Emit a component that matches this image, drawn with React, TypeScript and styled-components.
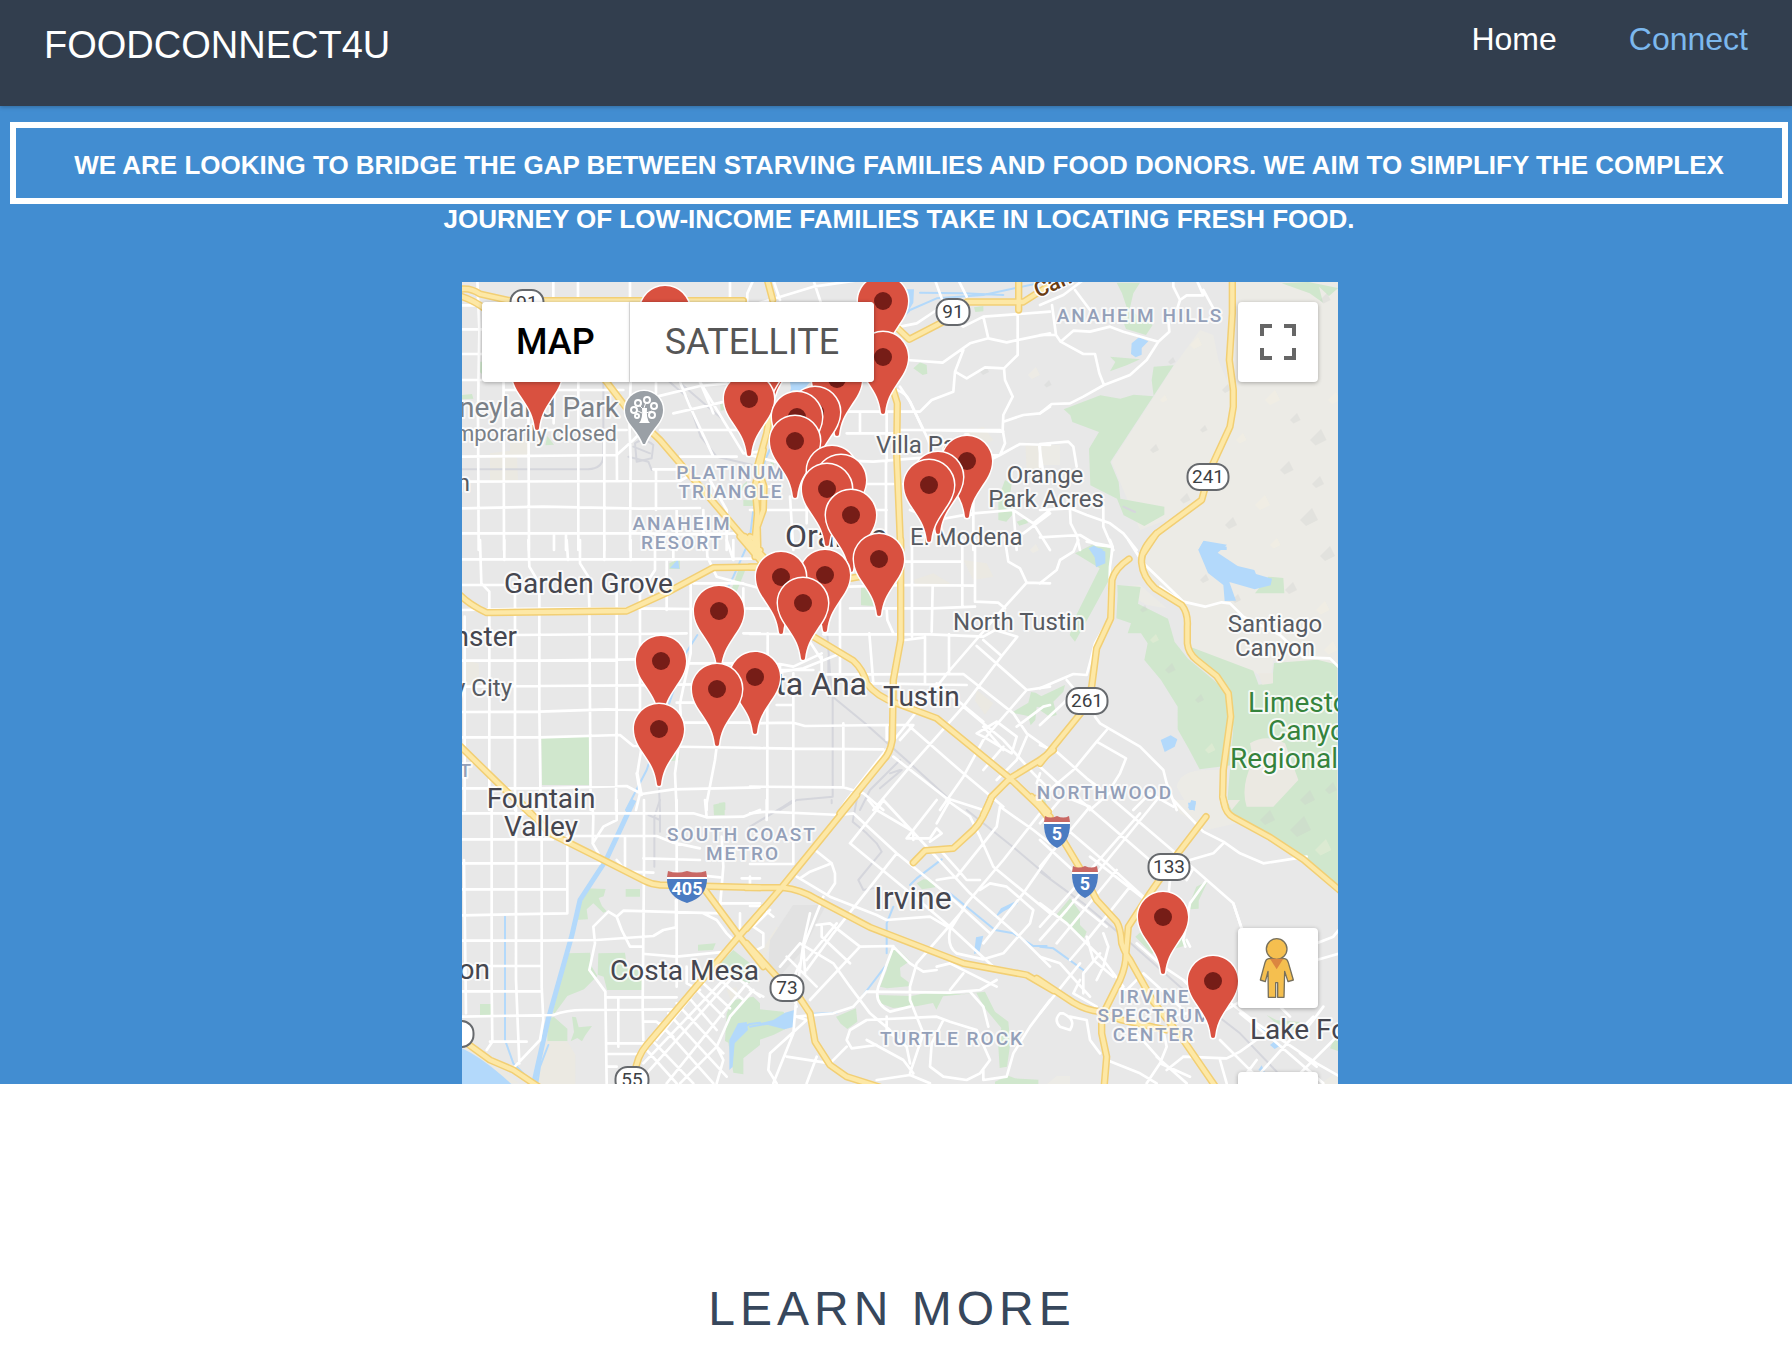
import React from "react";
import styled, { createGlobalStyle } from "styled-components";

const GlobalStyle = createGlobalStyle`
  *, *::before, *::after { box-sizing: border-box; }
  body {
    margin: 0;
    background: #fff;
    font-family: "Liberation Sans", Arial, Helvetica, sans-serif;
  }
`;

const Header = styled.header`
  position: relative;
  z-index: 1;
  display: flex;
  justify-content: space-between;
  align-items: flex-start;
  min-height: 106px;
  padding: 20px 44px 0;
  background: #323e4e;
  box-shadow: 0 1px 4px rgba(0, 0, 0, 0.25);
`;

const Brand = styled.a`
  color: #fff;
  font-size: 38px;
  line-height: 50px;
  text-decoration: none;
`;

const Nav = styled.nav`
  display: flex;
  gap: 72px;
`;

const NavLink = styled.a<{ $active?: boolean }>`
  color: ${(p) => (p.$active ? "#7cb8ee" : "#fff")};
  font-size: 32px;
  line-height: 38px;
  text-decoration: none;
`;

const Hero = styled.main`
  display: flex;
  flex-direction: column;
  padding: 16px 0 0 8px;
  background: #428dd1;
`;

const Mission = styled.p`
  height: 82px;
  margin: 0 4px 0 2px;
  padding: 10px 24px;
  border: 6px solid #fff;
  color: #fff;
  font-size: 26px;
  font-weight: 700;
  line-height: 54px;
  text-align: center;
  text-transform: uppercase;
`;

const MapFrame = styled.section`
  position: relative;
  width: 100%;
  max-width: 876px;
  height: 802px;
  margin: 78px auto 0;
  overflow: hidden;
  background: #e8e8e8;
  font-family: Roboto, Arial, sans-serif;
`;

const MapDrawing = styled.svg`
  display: block;
  width: 100%;
  height: 100%;
`;

const MapTypes = styled.div`
  position: absolute;
  top: 20px;
  left: 20px;
  display: flex;
  gap: 1px;
  border-radius: 4px;
  background: #e4e4e4;
  box-shadow: 0 1px 4px rgba(0, 0, 0, 0.3);
`;

const MapTypeButton = styled.button<{ $selected?: boolean }>`
  height: 80px;
  padding: 0 ${(p) => (p.$selected ? 34 : 35)}px;
  border: 0;
  border-radius: ${(p) => (p.$selected ? "4px 0 0 4px" : "0 4px 4px 0")};
  background: #fff;
  color: ${(p) => (p.$selected ? "#000" : "#565656")};
  box-shadow: ${(p) => (p.$selected ? "none" : "-1px 0 3px rgba(0, 0, 0, 0.12)")};
  font-family: inherit;
  font-size: 36px;
  font-weight: ${(p) => (p.$selected ? 500 : 400)};
  text-transform: uppercase;
`;

const SideControls = styled.div<{ $top: number }>`
  position: absolute;
  top: ${(p) => p.$top}px;
  right: 20px;
  display: flex;
  flex-direction: column;
  gap: 64px;
`;

const SquareButton = styled.button`
  display: grid;
  place-items: center;
  width: 80px;
  height: 80px;
  padding: 0;
  border: 0;
  border-radius: 4px;
  background: #fff;
  box-shadow: 0 1px 4px rgba(0, 0, 0, 0.3);
`;

const LearnMore = styled.section`
  padding: 197px 8px 20px 0;
  text-align: center;
`;

const LearnTitle = styled.h2`
  margin: 0;
  color: #37475c;
  font-size: 48px;
  font-weight: 400;
  letter-spacing: 5px;
  line-height: 56px;
  text-transform: uppercase;
`;

/* Each tile holds its shapes in thirds of a map unit, from its own corner. */
type Tile = {
  x: number;
  y: number;
  hill?: string;
  park?: string;
  water?: string;
  sand?: string;
  stream?: string;
  rail?: string;
  minor?: string;
  major?: string;
  highway?: string;
};

const tiles: Tile[] = [
  {
    x: 460,
    y: 280,
    park:
      "M60 245h10v40l-10-8zM6 345l30-3 4 14-34 2zM262 468l20 26-26 2zM780 370l14-14v34l-12 2zM836 628l24-24 6 34zM850 660l45 2v16h-45z",
    sand: "M90 520l80-10 4 90-84 6zM150 470h60v60h-60z",
    stream: "M900 690 L880 770 L872 810",
    rail:
      "M0 568H385Q428 565 430 530V310 M622 300 L680 350 L722 470 L770 530 L900 560 M650 300 L790 420 M525 490 Q550 470 580 495 L575 535 L530 545Z M505 530 L565 545 L575 570 M520 500 L570 520",
    minor:
      "M52 0 L58 150 L54 400 L56 810 M130 76 L132 810 M205 300 L207 810 M280 6V66 M281 300 V430 M282 760 V810 M318 760V810 M354 0V66 M355 306 V810 M433 450 V810 M470 480 L471 600 M510 0V66 M512 306 L508 420 L512 540 L510 810 M588 570 V690 M588 306V340 M660 306 L690 380 L760 530 M810 0V66 M880 0 L862 40V66 M720 306 L760 400 M0 76H66 M0 148H70 M0 222H66 M0 300H66 M130 330 H490 M0 450 H500 M600 450H900 M0 530 L470 525 L520 480 L560 440 M0 605 L660 603 L700 580 M0 685 L250 680 L540 686 L720 684 M0 760 H560 L650 763 L840 760 M580 568H650 M640 400 L860 350 M590 350 L720 318 L800 310 M720 306 L850 520 L900 515 M660 530H830 M750 600 L800 690V810 M650 690V810 M730 690 V810",
    highway:
      "M0 28 Q30 22 60 42 L150 62H850 M0 48 Q40 60 80 90 M420 280 L500 385 L600 480 L720 620 L840 760 L910 830 M910 510 L885 620 L892 700 L882 810",
  },
  {
    x: 750,
    y: 280,
    park:
      "M490 265l20-18 20 8 2 26-14 4zM672 82l28-4v16l-24 2zM745 655l20-55 20 12-6 40 12 48-22 25-24-5zM800 725l28-10 6 14-26 8zM60 545l15-8-5 24z",
    sand: "M826 490l40 5 8 70-44 4zM640 460l60-20 30 40-40 20z",
    water:
      "M470 28h22l-2 40-30 50zM120 306h60l-20 24h-36zM186 306h36l4 16-30 6z",
    stream:
      "M455 115 L480 90 L560 55 L700 45 L900 2 M510 38 L640 40 L760 45 M150 330L140 350 M45 540 L30 610 L10 690 L0 770 M130 310 L100 420 L45 540",
    minor:
      "M70 0 L90 60 M0 78 L190 20 L330 0 M190 0 L212 66 M555 0 L575 55 M625 0 L650 50 M450 140 L500 130 L560 90 L640 140 L700 110 L900 95 M700 110 L715 175 L660 190 L578 248 L470 240 M715 175 L770 187 L900 160 M640 210 L615 275 L650 295 L705 262 L762 265 M803 100 V225 L762 265 L765 300 L788 350 L760 405 L758 450 L765 490 L750 525 L680 560 M615 275 L610 335 L545 360 L510 395 H330 M450 320 L480 365 L520 450 M330 395 V460 M260 395 H330 M0 525 L130 560 L290 542 L370 545 L560 530 L750 525 L810 492 L900 495 M450 450 L750 450 M520 450 L760 455 M290 460 H430 L450 450 M760 425 L820 405 L870 400 L900 380 M868 500 L880 580 M0 620H60 M340 612H430 M360 690H410 M120 650 L130 810 M170 680 V730 M410 395 V545 M408 545V810 M480 690 L560 720 L670 700 L790 690 L850 730 L900 690 M670 540 V810 M560 620 V690 M460 612 H560 M0 690H220 M790 690 L800 810 M850 730 L900 810 M820 760 L900 700",
    major: "M440 330 Q470 340 480 365 L530 470 L560 540",
    highway:
      "M52 0 L68 60 M806 0V90 M440 142 L478 178 L580 125 L650 66H820 L900 15 M428 325 L442 370 L440 520 L452 810 M60 400 L50 460 L22 560 L42 620 L40 690 L22 740 L24 810 M-15 770 L30 810",
  },
  {
    x: 1040,
    y: 280,
    hill:
      "M480 150 L520 165 L535 240 L560 300 L575 0 H900 V810 H320 L380 720 L300 750 L215 545 L400 260Z M0 495h60v60H0z",
    park:
      "M230 8h70l-20 32-14 60-20-60zM240 100l28-10 70 45-20 30-60-18zM210 230l90 8-40 18-50 18 16-28zM335 300l6-40 60-4-190 290 25 60 5 50 132 24v24l-60 34-62-32-20-50-80-40-4-110 30-50-80-30-6-20-20-18 110-42 60 10 40-12 60 5zM725 10l80-4 90 18-28 24-30-28 12 48-40-28z M150 800l40-8 20 18z",
    water: "M275 190l22-18 28 12-20 20v20l-18 8-14-10zM490 784l70 16v10h-85zM160 810l20-6 12 6z",
    rail: "M250 680 L285 696",
    minor:
      "M0 75 L70 45 L130 0 M105 30 L150 90 M36 75 L48 165 H0 M48 165 L62 185 L130 222 H165 L178 280 L192 315 L130 350 L90 370 L35 372 L0 400 M192 315 L270 285 L320 240 L355 185 L250 155 L210 140 L150 155 L100 152 L62 185 M355 185 L388 155 L385 120 M400 0 V20 L420 60 L412 85 M420 60 L440 46 H490 L470 0 M490 30 L520 85 M0 492 L85 485 L100 500 L110 560 M0 500V560 M0 690 L90 685 L140 705 L210 730 L250 760 L290 810 M90 690 L92 730 L110 765 L120 810 M0 772 L120 765 L170 795 L215 800 M190 680V740 L220 810",
    highway:
      "M577 -10 V100 L568 240 L580 330V380 L570 440 L510 570 L485 660 L350 760 L310 820",
  },
  {
    x: 460,
    y: 540,
    park:
      "M244 595l144-6v146H246zM628 70l32-15v32h-32zM842 70l14 20-28 70-16-4zM630 664l28-46v42zM778 788h18v22h-18z",
    sand: "M10 360l46 10 2 60-48 16z",
    water: "M630 84l24-26 4 28z",
    stream: "M860 20 L820 110 L790 170 M712 285 L680 335 L560 690 L498 810",
    rail: "M597 740 L600 810",
    minor:
      "M60 0 L64 130 L88 155 V810 M0 135H130 M133 0 V60 M205 0 L208 80 L238 130 V500 L242 810 M320 0 L324 60 M360 0 V70 L385 110 L388 200 L392 810 M433 0V60 M470 160 V520 L468 810 M512 0 V60 M585 0V90 L540 160V520 L545 620 L532 700 L545 765 M165 150 V810 M14 230V810 M0 58 H640 L900 56 M0 210 L240 206 L540 205 L700 207 L900 205 M0 285H165 L540 282 L680 280 M850 280H900 M0 362H240 L530 358 M0 440 L240 438 L530 436 L700 433 M0 516 L240 515 L440 508 L540 510 M0 592H240 L480 585 L520 618 L900 624 M0 745H240 L500 738 L545 762 L640 748 L900 742 M640 60 V10 M740 0 L742 50 L770 110 L900 145 M820 0V60 M800 0 L820 60 M850 145 V210 M692 130 V340 L660 490 L664 560 L645 700 L650 810 M770 620 L765 660 L740 790V810 M650 488 H700 M645 548 H900 M690 370 H830 M700 130 H850 M530 700 L540 760 L528 810 M620 60V210",
    highway: "M0 165 Q30 195 80 218 L500 213 L620 158 L760 83 L900 81 M840 -10 L900 60 M0 618 L120 735 L210 820 M885 0V50",
  },
  {
    x: 750,
    y: 540,
    park:
      "M333 140h37v58l-37-2zM785 518l50-30 8-32 14 2 20 12 23-10v48l-40-8-4 40-14 16-8-28z",
    sand: "M490 120l60-20 50 30-10 10h-90zM680 450l50 40-25 34-30-42zM640 60l70 10 20 40-60 10z",
    rail:
      "M232 280 L240 400 L248 470 L345 550 L480 670 L590 770 M248 470 V770 L140 780 L90 810 M450 660 L360 750 L330 810 M455 690 L390 745 M420 700 L450 690 M235 350V470",
    minor:
      "M0 206H90 M270 140 V400 M0 282 H160 M220 283 L540 283 L700 290 M300 205 H550 L675 200 M300 140 L480 135 L675 137 M486 0 V290 M460 65 H635 M637 0 V200 M675 0 V185 L745 188 L765 205 M548 140 L545 275 M410 205 L412 240 L430 280 M525 290 V430 M597 283 V400 M465 300 L525 292 M358 280 L370 430 M0 372H90 L130 380 L215 340 M90 372 V410 M60 400 L160 385 L260 345 M170 290 L215 360 M80 390 H190 M230 403 H360 L640 402 L790 520 L830 580 L900 630 M360 430 L650 435 M765 0 L775 65 L810 85 L830 128 L900 130 M830 128 L760 205 L600 390 L440 590 L290 780 L270 810 M700 290 L735 270 L802 290 L755 348 L700 300 M755 348 L640 500 L480 680 L370 810 M680 318 L830 450 L900 440 M830 450 L700 600 L640 710 L570 810 M640 500 L760 600 L850 700 M560 430 L700 545 M480 560 L640 700 L760 800 M430 650 L590 775 L700 810 M0 550 L130 548 L165 558 L410 555 H490 L450 600 M0 624 L130 626 L400 628 M0 740 L280 742 L340 760 L400 810 M53 280V400 M130 400 V810 M52 495 V810 M80 495H130 M280 550 V740 M410 560 V600 M680 580 L740 545 L800 590 L785 640 L700 590Z M700 560 L760 630 M830 590 L800 660 L740 720 M800 560 L880 500 L900 495 M760 620 L700 690 M850 700 L900 750 M870 700 L860 730 M215 350 V400",
    highway:
      "M0 15 L35 50 M0 81H30 M300 115 L330 110 M190 290 L310 362 Q340 390 350 430 Q380 470 440 490 L560 535 L780 715 L900 830 M452 0 V300 L430 420 L427 600 Q420 640 400 660 L270 820 M780 715 L870 660 L910 630 M780 715 L725 770 L700 825 M0 -10 L20 0V15",
  },
  {
    x: 1040,
    y: 540,
    hill:
      "M335 0 L300 60 L310 100 L440 210 L455 330 L500 350 L650 400 L690 430 L700 360 L900 385 V0Z M410 740 Q420 690 500 690 L545 690 L570 810 H900 V700 L860 720 L830 770 L780 810 L450 810Z M230 140l70-5 80 70-60-10z",
    park:
      "M105 40l50-25 55 10 5 80-60 110-50 90-16-20 20-60 40-80 30-60zM232 135l70 6-8 50 90 45 20 70 40 50 60 50 70 60 0 210-95 12-32-60-34-60V500l-50-80-50-60 10-50-20-30h-40l10-30-44-15 4-70zM450 320l190 72 16 42 40-5 6-60 130-10 60 15V810H560l20-250-14-100-60-60zM645 160l40-50 45 4 3 46zM0 470l75-35-5 20-30 30 10 40-20 6-30-20z",
    sand: "M630 610 Q680 580 735 610 L775 720 L700 800 H620 Q600 740 640 660Z M655 400h44v30l-32 4z",
    water:
      "M475 30l16-28 70 12-28 24 60 40 50 12 5 12 48 14-4 20-48 12-76-22 20 56-34 1-4-48-46-36zM146 25l16-8 34 18v35l-28 12-4-30zM362 600l30-14 20 12-8 22-30 16zM444 788h24l-8 22h-12z",
    minor:
      "M265 0 L300 55 M300 60 L430 185 L495 200 L545 187 L570 190 L610 230 L720 285 L790 352 L870 355 L900 385 M430 190 L360 140 M210 0 L218 20 L210 80 L205 240 L165 310 L155 350 L140 405 L100 402 L0 445 M115 0 L100 35 L60 60 L50 90 L0 130 M80 420 L105 450 L70 490 L0 555 M165 530 L180 550 L300 620 L370 690 L380 730 L410 810 M200 570 L170 605 L100 690 L40 740 L0 780 M0 615 L50 635 L140 715 L180 745 M170 605 L258 655 L240 700 L215 740 M0 680 L60 735 M280 810 L330 760 L400 800 M140 5 L210 18 M150 810 L230 740",
    highway:
      "M350 -20 Q300 30 305 70 Q308 110 345 145 L425 195 Q445 220 442 260 V310 Q445 340 470 360 L530 408 L565 460 L572 530 L550 690 L548 770 L556 800 M267 57 Q225 85 216 120 L212 235 L170 325 L155 440 L130 510 L0 670 M-12 775 L25 815",
  },
  {
    x: 460,
    y: 800,
    park:
      "M345 360l30-95 62 2-6 22-15 5 10 24 14 16-10 4-30-28-20 18 4 30zM497 267h43v23h-43zM320 460l70-2 4 40 18 30-40 40-50 20-40 55-3-10zM415 460l80-2 6 46 48 10v56h-108l-10-40-18-6zM60 612h35v33H60zM262 655l20-4 40 35v38h-60zM336 650l12 2 8 30 40-4-20 28-10 18-14-10-20 10 10-28zM714 434l53-4-8 20-45 2zM760 14l34-8v40h-32zM770 500l50-50 50 40v60l-60-20zM800 640l20-40 60-10 20 20v125l-50 40 0 48-30-5-15-90-10-5-5 80z",
    sand: "M262 724h60l24 40v90H220l20-90zM800 570l30-10 4 30-20 14zM6 745l40-5 130 110h-30z",
    water:
      "M6 745 Q60 770 130 830 L155 853 H6Z M808 720l26-50 26-4 4 24-40 40-6 70-10 10z",
    stream:
      "M135 350 L135 720 L160 790 L210 840 M265 735 L240 800 L232 850 M830 690 L870 672 L900 668",
    rail: "M583 200 V50 L600 0 M600 30V95 M565 45L600 60",
    minor:
      "M0 40H470 L700 40 L740 52 L850 50 L900 30 M0 118H280 M330 108H590 L640 128 L720 145 M0 190 H420 M470 180 L500 215 L580 218 M0 268H322 L322 340 L0 346 M0 422 H240 L410 420 L580 408 L610 390 L648 382 M0 498H240 M0 574H245 M0 650 L280 645 Q320 630 370 630 L640 628 M90 725H200 M12 180 L18 640 M95 0V560 L97 725 L80 750 M168 0V540 L178 790 M245 0V560 L250 660 L240 720 L162 802 M322 110V340 M395 0 L400 50 L398 130 L415 160 M470 0V60 L430 80 L398 130 M495 110V200 M552 0V200 L548 620 L550 720 M650 0V220 M650 300V560 M735 0 L740 52 M785 110 L790 200 L780 320 M550 175 L720 180 M640 218 L780 232 M445 335 L400 380 L405 430 L388 510 L436 575 L440 850 M445 335 L470 350 L490 332 L700 338 L790 340 M470 350 L485 390 L510 440H548 M555 462 L650 470 L800 455 M440 592H650 M475 592V740 M440 730H550 M440 762H530 M440 800H470 M550 665H590 L640 710 M648 382V300 M680 500 V550 L720 570 M780 310 H900 M840 340V400 M845 235 H900 M730 340 L770 360 L800 400 L820 420 M870 230V260",
    major:
      "M600 670 L760 850 M625 640 L800 830 M650 610 L790 760 M680 585 L770 690 M700 560 L790 650 M725 545 L810 625 M770 530 L850 600 M560 750 L650 850 M580 725 L700 850 M860 550 L620 850 M820 530 L560 820 M790 540 L550 790 M880 570 L810 650 L770 740 L660 850 M770 740 L790 780 L770 850 M710 570 L590 720 M840 540 L900 590",
    highway:
      "M180 5 L270 100 L420 175 L555 243 Q575 253 600 255 L900 263 M735 270 L835 405 L910 500 M910 325 L840 405 L560 735 Q530 770 525 820 M0 715 L90 780 L160 810 L250 870",
  },
  {
    x: 750,
    y: 800,
    park:
      "M390 560l20-50 10-60 20-5 40 38-30 20 2 26 24 18v12l-65 6zM385 585l100 3 70-15 80 10 70-8 30 60 40 30 6 65-10 70-22 4-5-80 10-40-50-60-25-45-100 10-20 40-10-20-50 10-70 5-40-15zM500 250l20-12 26 2 10 22-40 6zM258 650l60-25 4 40-30 22-20-16zM0 625l100 10 30 40-60 30-70 25zM735 845l40-18 20 8 70 4v15H735z",
    water:
      "M20 672l50-12 35-22 28-8v50l-30 8-60-16zM672 462l6-50 22-5-12 50zM733 355l20-30 50-24v10l-44 24z",
    sand: "M30 460l50-80 12 10-30 40-20 50z",
    stream:
      "M0 680 L60 670 M175 642 L260 638 M340 585 L405 500 M410 460 V370 L430 320 M480 255 L500 235 L575 178 M600 280 L735 390 L790 400 L850 438H890",
    rail:
      "M320 0 L308 65 L350 100 L380 130 L395 155 L325 240 L340 270 L370 265 M650 30 L700 70 L800 150 L900 235 M245 0V10 M0 80 L100 20 L130 0",
    minor:
      "M0 40 L50 35 L270 45 L310 40 M50 0V60 M130 0V190 M0 192H130 M195 150 L245 190 L255 220 V250 L235 280 M245 190 L180 215 L150 235 M300 130 L470 270 L600 380 L730 500 M300 130 L380 30 L400 0 M310 40 L440 160 L600 290 L720 400 M355 0 L380 30 L490 95 V120 M440 160 L250 400 L170 510 M560 0 L470 115 H540 L560 85 L575 100 L540 125 M600 0 L560 70 M590 0 L660 50 L690 110 L730 200 L900 340 M575 155 L620 205 L650 240 L690 240 M700 130 L620 230 L560 240 M400 0 L660 280 L740 350 L820 420 L900 500 M690 270 L720 250 L770 260 L850 330 L840 370 L760 460 L700 478 L620 460 Q590 440 600 390 L650 310 L760 180 L870 40 M900 165 L820 280 L700 430 M750 20 L740 80 L700 130 M750 20 L850 90 L900 130 M640 330 L500 490 L480 560V600 L520 700 L480 820 M140 230 L240 290 L380 345 L410 360 L540 350 L600 385 M220 290 L160 440 L165 520 M180 340 L160 430 L140 580 L130 700 L70 850 M200 375 L240 370 L330 440 L430 438 M215 380V410 L300 490 M150 430 L250 490 L300 560 L360 640 L420 690 M110 470 L200 560 M90 500 L150 430 M60 330 L10 380 L40 400 V440 L0 460 M0 318 H30 L70 350 M150 490 L120 560 L140 620 M260 370 L170 480 M330 440 L180 600 M430 440 L385 560 Q370 610 420 635 L480 620 M430 440 L480 490 L520 515 L560 510 M350 575 L600 578 L690 570 L740 540 M600 490 L740 560 M640 520 L600 570 M660 575 L700 620 L715 680 M350 575 L310 620 L250 640 L140 650 M140 650 L170 660 L60 760 L55 810 L80 850 M300 690 L350 660 L560 650 L600 665 L680 690 L720 780 L690 820 L650 840 L580 830 L540 800 L545 730 L580 660 M300 690 L290 720 L305 745 L380 735 M350 720 L460 780 L490 820 M410 650V690 L470 740 L480 790 M110 770 L240 790 L290 740 M200 770 L170 850 M380 840 L480 825 L540 850 M700 810 V840 L770 830 L790 760 L840 680 L900 600 M0 570 L40 590 M560 500 L600 490",
    highway:
      "M320 -15 L95 262 L-10 385 M-10 263 H100 Q150 268 200 298 L360 382 L640 490 L830 525 L910 572 M725 -10 Q700 60 670 90 L610 145 L525 152 L490 188 M-10 430 L80 530 M140 580 L180 640 L195 725 L240 795 L290 830 L400 865 M845 -10 L900 60",
  },
  {
    x: 1040,
    y: 800,
    hill: "M400 0 H560 L590 70 L500 90 L420 40Z M840 853l40-30h20v30z M20 853l30-25h40v25z",
    park:
      "M560 0 H900 V265 L790 180 L580 50Z M90 295l30 40 0 40 20 20-8 20-84-70zM445 320l24-60 35-18-28 60 0 24-24 2zM286 410l20-18 40 60-10 10zM432 400l8 36-50 14zM680 645l30 16 70 5-10 26-60-20zM870 745l14-30 16-10v50zM0 10l15-14 5 20z",
    sand: "M560 0 L600 0 L575 30Z",
    water: "M444 24l10-24 14 4-4 28zM690 735l12-10 22 10-20 12zM655 810l10-14 10 22zM660 680l14 4 16 18-20-6z",
    stream: "M0 440 L40 445 L130 510",
    rail: "M0 215 L130 310 L250 410 L420 560 L600 700 L710 815",
    minor:
      "M60 0 L0 70 M120 0 L190 60 L340 190 M100 0 L150 20 L0 200 M220 0 L390 145 L460 205 L580 310 L605 385 M400 0 L490 95 L550 125 L600 160 L670 190 L800 170 M300 40 L160 200 L0 380 M350 0 L80 330 L0 420 M60 70 L200 190 L310 290 M0 120 L120 230 M150 170 L330 310 M230 210 L50 430 M270 260 L150 410 L90 480 M0 310 L80 370 L190 480 L250 560 M100 300 L200 380 M190 400 L205 440 L190 500 L170 540 M140 410 L160 480 L220 530 M120 490 L0 640 M120 540 L100 580 L170 620 M0 470 L60 490 L150 590 M130 580 L130 520 L180 460 M460 205 L440 240 M550 130 L520 160 L450 180 M500 240 L450 310 L430 420 L436 440 M390 240 L385 290 M60 640 Q40 660 60 680 L90 690 Q110 660 70 640Z M90 650 L140 660 L150 720 L180 760 M200 780 L300 820 L350 850 M290 430 L370 500 L430 540 L470 580 L500 650 M310 520 L420 620 M440 420 L450 440 M540 720 L640 820 L690 850 M430 770 L560 775 L600 755 L690 690 M540 780 L560 850 M660 820 L750 720 L820 650 M560 600 L650 670 L830 790 L900 830 M640 850 L620 820 L650 780 M700 600 L750 650 M600 640 L700 720 L850 850 M850 620 L820 660 L780 710 M900 700 L780 820 M780 760 L830 800 M340 620 L380 650 L440 640 M300 530 L260 570 L230 560 M830 430 L880 410 L900 385 M830 480 L900 460 M370 690 L380 740 L360 790 L320 850 M350 770 L440 850 M380 810 L430 770 M290 700 L370 790 M360 790L450 830",
    major: "M605 385 L580 310 M540 640 L600 605",
    highway:
      "M548 -10 L552 10 Q558 40 580 52 L690 112 L790 178 L910 280 M-5 0 L60 105 L120 205 L170 300 L230 365 Q242 385 245 430 Q255 460 270 480 L340 605 L430 720 L530 865 M498 50 L410 165 L330 280 L265 380 L258 460 Q258 500 240 540 L185 650 V700 L200 770 L192 865 M-10 535 L100 608 Q140 632 180 635 L245 660 L380 690",
  },
];

type Tone = "city" | "town" | "area" | "park" | "poi";

type Label = {
  text: string;
  x: number;
  y: number;
  tone: Tone;
  anchor?: "start" | "middle" | "end";
};

const tones: Record<Tone, { color: string; spacing: number; weight: number }> = {
  city: { color: "#45464f", spacing: 0, weight: 400 },
  town: { color: "#575b62", spacing: 0, weight: 400 },
  area: { color: "#939fb8", spacing: 2, weight: 500 },
  park: { color: "#35833c", spacing: 0, weight: 400 },
  poi: { color: "#7a8087", spacing: 0, weight: 400 },
};

const MapLabel = styled.text<{ $tone: Tone; $size: number }>`
  fill: ${(p) => tones[p.$tone].color};
  stroke: #fff;
  stroke-opacity: 0.8;
  stroke-width: 4px;
  stroke-linejoin: round;
  paint-order: stroke;
  font-size: ${(p) => p.$size}px;
  font-weight: ${(p) => tones[p.$tone].weight};
  letter-spacing: ${(p) => tones[p.$tone].spacing}px;
`;

const labelSets: { size: number; labels: Label[] }[] = [
  {
    size: 32,
    labels: [
      { text: "Orange", x: 785, y: 547, tone: "city" },
      { text: "Santa Ana", x: 867, y: 695, tone: "city", anchor: "end" },
      { text: "Irvine", x: 874, y: 909, tone: "city" },
    ],
  },
  {
    size: 28,
    labels: [
      { text: "Disneyland Park", x: 619, y: 417, tone: "poi", anchor: "end" },
      { text: "Garden Grove", x: 504, y: 593, tone: "city" },
      { text: "Westminster", x: 517, y: 646, tone: "city", anchor: "end" },
      { text: "Tustin", x: 883, y: 706, tone: "city" },
      { text: "Fountain", x: 541, y: 808, tone: "city", anchor: "middle" },
      { text: "Valley", x: 541, y: 836, tone: "city", anchor: "middle" },
      { text: "Costa Mesa", x: 610, y: 980, tone: "city" },
      { text: "Lake Forest", x: 1250, y: 1039, tone: "city" },
      { text: "Huntington", x: 490, y: 979, tone: "city", anchor: "end" },
      { text: "Limestone", x: 1248, y: 712, tone: "park" },
      { text: "Canyon", x: 1268, y: 740, tone: "park" },
      { text: "Regional", x: 1230, y: 768, tone: "park" },
    ],
  },
  {
    size: 24,
    labels: [
      { text: "Stanton", x: 470, y: 491, tone: "town", anchor: "end" },
      { text: "Midway City", x: 512, y: 696, tone: "town", anchor: "end" },
      { text: "Villa Park", x: 876, y: 453, tone: "town" },
      { text: "Orange", x: 1045, y: 483, tone: "town", anchor: "middle" },
      { text: "Park Acres", x: 1046, y: 507, tone: "town", anchor: "middle" },
      { text: "El Modena", x: 910, y: 545, tone: "town" },
      { text: "North Tustin", x: 1019, y: 630, tone: "town", anchor: "middle" },
      { text: "Santiago", x: 1275, y: 632, tone: "town", anchor: "middle" },
      { text: "Canyon", x: 1275, y: 656, tone: "town", anchor: "middle" },
    ],
  },
  {
    size: 22,
    labels: [{ text: "Temporarily closed", x: 617, y: 441, tone: "poi", anchor: "end" }],
  },
  {
    size: 19,
    labels: [
      { text: "T", x: 473, y: 777, tone: "area", anchor: "end" },
      { text: "ANAHEIM HILLS", x: 1140, y: 322, tone: "area", anchor: "middle" },
      { text: "PLATINUM", x: 731, y: 479, tone: "area", anchor: "middle" },
      { text: "TRIANGLE", x: 731, y: 498, tone: "area", anchor: "middle" },
      { text: "ANAHEIM", x: 682, y: 530, tone: "area", anchor: "middle" },
      { text: "RESORT", x: 682, y: 549, tone: "area", anchor: "middle" },
      { text: "NORTHWOOD", x: 1105, y: 799, tone: "area", anchor: "middle" },
      { text: "SOUTH COAST", x: 742, y: 841, tone: "area", anchor: "middle" },
      { text: "METRO", x: 743, y: 860, tone: "area", anchor: "middle" },
      { text: "IRVINE", x: 1155, y: 1003, tone: "area", anchor: "middle" },
      { text: "SPECTRUM", x: 1155, y: 1022, tone: "area", anchor: "middle" },
      { text: "CENTER", x: 1154, y: 1041, tone: "area", anchor: "middle" },
      { text: "TURTLE ROCK", x: 952, y: 1045, tone: "area", anchor: "middle" },
    ],
  },
];

const RoadName = styled.text`
  fill: #6a3c12;
  stroke: #fff;
  stroke-width: 3px;
  stroke-linejoin: round;
  paint-order: stroke;
  font-size: 22px;
  font-weight: 500;
`;

const ShieldText = styled.text<{ $light?: boolean }>`
  fill: ${(p) => (p.$light ? "#fff" : "#3c4043")};
  font-size: ${(p) => (p.$light ? 18 : 19)}px;
  font-weight: ${(p) => (p.$light ? 700 : 400)};
  text-anchor: middle;
`;

const stateRoutes = [
  { name: "91", x: 527, y: 303 },
  { name: "91", x: 953, y: 312 },
  { name: "241", x: 1208, y: 477 },
  { name: "261", x: 1087, y: 701 },
  { name: "133", x: 1169, y: 867 },
  { name: "73", x: 787, y: 988 },
  { name: "55", x: 632, y: 1080 },
  { name: "1", x: 457, y: 1034 },
];

const interstates = [
  { name: "405", x: 687, y: 871, half: 20 },
  { name: "5", x: 1057, y: 816, half: 13 },
  { name: "5", x: 1085, y: 866, half: 13 },
];

/* Pins run north to south, so that the nearer ones cover the farther ones. */
const pins: [number, number][] = [
  [883, 301], [665, 311], [771, 350], [767, 352], [883, 357], [537, 373],
  [837, 379], [749, 399], [815, 412], [797, 417], [795, 441], [967, 461],
  [832, 471], [938, 477], [841, 480], [929, 485], [827, 489], [851, 515],
  [879, 559], [825, 575], [781, 577], [803, 603], [719, 611], [661, 661],
  [755, 677], [717, 689], [659, 729], [1163, 917], [1213, 981],
];

const facets: [number, number, number][] = [
  [1190, 345, 8], [1222, 390, 6], [1168, 362, 5], [1265, 400, 10], [1290, 420, 7],
  [1310, 440, 11], [1236, 440, 7], [1280, 470, 9], [1312, 484, 8], [1255, 505, 10],
  [1225, 525, 8], [1300, 520, 12], [1270, 545, 7], [1320, 556, 10], [1240, 330, 6],
  [1328, 400, 8], [1150, 450, 6], [1200, 430, 5], [1160, 400, 5], [1180, 500, 7],
  [1285, 590, 8], [1316, 610, 9], [1232, 600, 6], [1200, 580, 6], [1324, 650, 9],
  [1260, 820, 10], [1290, 830, 14], [1315, 850, 11], [1300, 800, 10], [1325, 790, 8],
  [1150, 640, 6], [1165, 670, 7], [1195, 700, 6], [1205, 750, 7], [1140, 610, 5],
  [980, 372, 6], [1028, 375, 8], [1044, 385, 5], [1320, 300, 7], [1030, 550, 6],
];

function layer(key: "hill" | "park" | "water" | "sand", fill: string) {
  return tiles.map((t, i) =>
    t[key] ? (
      <path key={key + i} d={t[key]} fill={fill} transform={`translate(${t.x} ${t.y}) scale(${1 / 3})`} />
    ) : null
  );
}

function lines(
  key: "stream" | "rail" | "minor" | "major" | "highway",
  stroke: string,
  width: number
) {
  return tiles.map((t, i) =>
    t[key] ? (
      <path
        key={key + stroke + i}
        d={t[key]}
        fill="none"
        stroke={stroke}
        strokeWidth={width}
        strokeLinecap="round"
        strokeLinejoin="round"
        transform={`translate(${t.x} ${t.y}) scale(${1 / 3})`}
      />
    ) : null
  );
}

function ThemeParkPin() {
  return (
    <g transform="translate(644 410)">
      <path
        d="M0-19A19 19 0 0 1 19 0C19 8 14 14 10 19C6 24 3 29 1 34H-1C-3 29-6 24-10 19C-14 14-19 8-19 0A19 19 0 0 1 0-19Z"
        fill="#9aa0a6"
        stroke="#fff"
        strokeWidth="3"
        paintOrder="stroke"
      />
      <path d="M-5 13Q-1 9-2-2H3Q2 9 6 13Z" fill="#fff" />
      <path d="M-2 3L-8 0M2 3L8 1M0-2L2-8M-1-1L-6-6" stroke="#fff" strokeWidth="1" />
      <g fill="#9aa0a6" stroke="#fff" strokeWidth="2">
        <circle cx="-10" cy="0" r="3" />
        <circle cx="-6" cy="-7" r="3" />
        <circle cx="3" cy="-10" r="3" />
        <circle cx="10" cy="-4" r="3" />
        <circle cx="8" cy="5" r="3" />
        <circle cx="-7" cy="6" r="2" />
      </g>
    </g>
  );
}

function CityMap() {
  return (
    <MapDrawing
      viewBox="462 282 876 802"
      preserveAspectRatio="xMidYMid slice"
      role="img"
      aria-label="Food donors around Orange County"
    >
      <rect x="462" y="282" width="876" height="802" fill="#e8e8e8" />
      {layer("hill", "#ecebe6")}
      {layer("park", "#d0e7cd")}
      {layer("sand", "#ebe9e2")}
      <path d="M770 940L793 905L826 905L803 950L780 976L768 968Z" fill="#e2e2e2" />
      {facets.map(([x, y, r], i) => (
        <path
          key={i}
          d={`M${x} ${y}l${r} ${-r}l${r / 2} ${r}l${-r} ${r / 2}z`}
          fill={i % 3 === 0 ? "#fdf3e0" : "#c9ccc8"}
          opacity="0.28"
        />
      ))}
      {layer("water", "#b3d9fb")}
      {lines("rail", "#d5d6dc", 6)}
      {lines("stream", "#b3d9fb", 6)}
      <path
        d="M634 800L606 860L580 900L572 935L548 1020L534 1082"
        fill="none"
        stroke="#b3d9fb"
        strokeWidth="5"
      />
      {lines("minor", "#fff", 8)}
      {lines("major", "#fff", 8)}
      {lines("highway", "#f2cf74", 22)}
      {lines("highway", "#fde8a6", 13)}

      {stateRoutes.map((r) => {
        const w = r.name.length > 2 ? 41 : 33;
        return (
          <g key={r.name + r.x}>
            <rect x={r.x - w / 2} y={r.y - 13} width={w} height="26" rx="12" fill="#fff" stroke="#66696d" strokeWidth="2" />
            <ShieldText x={r.x} y={r.y + 6}>{r.name}</ShieldText>
          </g>
        );
      })}
      {interstates.map((r) => (
        <g key={r.name + r.x} transform={`translate(${r.x} ${r.y})`}>
          <path d={`M${-r.half + 1} 0Q${-r.half / 2} 3 0 0Q${r.half / 2} 3 ${r.half - 1} 0L${r.half} 6H${-r.half}Z`} fill="#c96864" />
          <path d={`M${-r.half} 8H${r.half}Q${r.half} 26 0 32Q${-r.half} 26 ${-r.half} 8Z`} fill="#4a7bc2" />
          <path d={`M${-r.half} 7H${r.half}`} stroke="#fff" strokeWidth="2" />
          <ShieldText $light x="0" y="24">{r.name}</ShieldText>
        </g>
      ))}

      {labelSets.map((set) =>
        set.labels.map((l) => (
          <MapLabel
            key={l.text + l.x + l.y}
            x={l.x}
            y={l.y}
            textAnchor={l.anchor ?? "start"}
            $tone={l.tone}
            $size={set.size}
          >
            {l.text}
          </MapLabel>
        ))
      )}
      <RoadName transform="translate(1038 298) rotate(-24)">Cañon</RoadName>
      <ThemeParkPin />

      {pins.map(([x, y]) => (
        <g key={`${x}-${y}`} transform={`translate(${x} ${y}) scale(${1 / 3})`}>
          <path
            d="M0-75C41-75 75-41 75 0C75 32 58 55 41 80C22 108 10 130 6 166Q6 171 0 171Q-6 171-6 166C-10 130-22 108-41 80C-58 55-75 32-75 0C-75-41-41-75 0-75Z"
            fill="#d95140"
            stroke="#fff"
            strokeWidth="9"
            paintOrder="stroke"
          />
          <circle r="27" fill="#761d17" />
        </g>
      ))}
    </MapDrawing>
  );
}

function FullscreenIcon() {
  return (
    <svg width="36" height="36" viewBox="0 0 36 36" fill="none" stroke="#666" strokeWidth="4" aria-hidden="true">
      <path d="M2 12V2H12M24 2H34V12M34 24V34H24M12 34H2V24" />
    </svg>
  );
}

function PegmanIcon() {
  return (
    <svg width="80" height="80" viewBox="0 0 240 240" aria-hidden="true">
      <g fill="#f5bf4f" stroke="#77705c" strokeWidth="4" strokeLinejoin="round">
        <path d="M92 92H140Q148 93 151 104L166 156L150 161L140 130L138 208H119V164H113V208H91L90 130L82 161L67 156L81 104Q84 93 92 92Z" />
        <circle cx="116" cy="63" r="31" />
      </g>
      <path d="M96 92H136L116 124Z" fill="#db8640" />
    </svg>
  );
}

function PlusIcon() {
  return (
    <svg width="36" height="36" viewBox="0 0 36 36" stroke="#666" strokeWidth="4" aria-hidden="true">
      <path d="M18 4V32M4 18H32" />
    </svg>
  );
}

export default function App() {
  return (
    <>
      <GlobalStyle />
      <Header>
        <Brand href="#">FOODCONNECT4U</Brand>
        <Nav aria-label="Main">
          <NavLink href="#home">Home</NavLink>
          <NavLink href="#connect" $active aria-current="page">Connect</NavLink>
        </Nav>
      </Header>
      <Hero>
        <Mission>
          We are looking to bridge the gap between starving families and food donors. We aim to
          simplify the complex journey of low-income families take in locating fresh food.
        </Mission>
        <MapFrame aria-label="Map">
          <CityMap />
          <MapTypes>
            <MapTypeButton type="button" $selected aria-pressed="true">Map</MapTypeButton>
            <MapTypeButton type="button" aria-pressed="false">Satellite</MapTypeButton>
          </MapTypes>
          <SideControls $top={20}>
            <SquareButton type="button" aria-label="Toggle fullscreen view"><FullscreenIcon /></SquareButton>
          </SideControls>
          <SideControls $top={646}>
            <SquareButton type="button" aria-label="Open Street View"><PegmanIcon /></SquareButton>
            <SquareButton type="button" aria-label="Zoom in"><PlusIcon /></SquareButton>
          </SideControls>
        </MapFrame>
      </Hero>
      <LearnMore>
        <LearnTitle>Learn More</LearnTitle>
      </LearnMore>
    </>
  );
}
